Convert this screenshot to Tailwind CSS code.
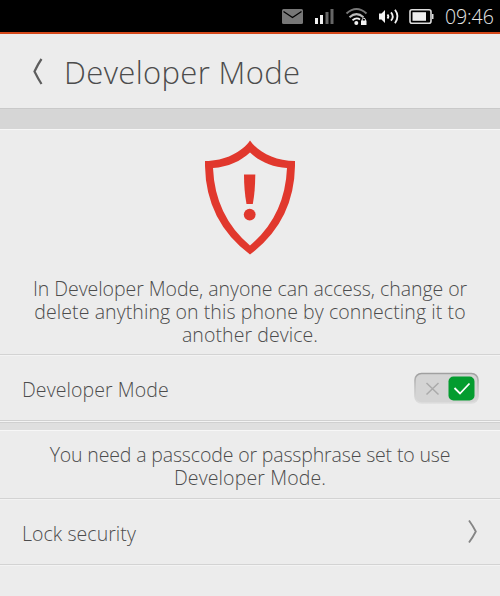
<!DOCTYPE html>
<html lang="en">
<head>
<meta charset="utf-8">
<title>Developer Mode</title>
<script src="https://cdn.jsdelivr.net/npm/@tailwindcss/browser@4"></script>
</head>
<body class="w-[500px] h-[596px] overflow-hidden bg-[#ececec] font-['Open_Sans','Noto_Sans',sans-serif] font-light text-[#4c4c4c]">
<div class="flex flex-col h-full">
  <header class="h-[34px] shrink-0 bg-black border-b-2 border-[#d4481a] flex items-center">
    <svg class="w-[160px] h-[32px] ml-[278px]" viewBox="278 0 160 32" fill="none">
      <rect x="282" y="9" width="21" height="15" rx="1.5" fill="#777"/>
      <path d="M283.500 11.500 292.500 17.500 301.500 11.500" stroke="#000" stroke-width="1.300"/>
      <path d="M315 18h3v6h-3zM320 15h3v9h-3z" fill="#f2f2f2"/>
      <path d="M325.500 12h3v12h-3zM330.500 9h3v15h-3z" fill="#666"/>
      <path d="M346.500 13.500Q356.500 4.500 366.500 13.500" stroke="#777" stroke-width="2"/>
      <path d="M349.500 17.200Q356.500 11 363.500 17.200" stroke="#bbb" stroke-width="2"/>
      <path d="M352.500 20.200Q356.500 17 360 19.500" stroke="#f2f2f2" stroke-width="1.800"/>
      <circle cx="356.300" cy="23" r="2" fill="#f2f2f2"/>
      <path d="M361 20.500h5.500v4.500H361z" fill="#f2f2f2"/>
      <path d="M362.200 21v-1.200a1.600 1.600 0 0 1 3.200 0V21" stroke="#f2f2f2" stroke-width="1"/>
      <path d="M379 13.500h2.500l3.500-3.500v13l-3.500-3.500H379z" fill="#f2f2f2"/>
      <path d="M387.500 14.500q1.700 2 0 4M391 12.300q3.500 4.200 0 8.400M395 9.800q5 6.700 0 13.400" stroke="#f2f2f2" stroke-width="1.800"/>
      <rect x="410" y="9.800" width="21" height="13.400" rx="2" stroke="#ddd" stroke-width="1.600"/>
      <path d="M412.500 12.200h13.500v8.600h-13.500z" fill="#eee"/>
      <path d="M432 14h1.500v5H432z" fill="#ddd"/>
    </svg>
    <span class="ml-[7px] mt-[2px] text-[19.5px] leading-[32px] text-[#e8e8e8] tracking-[-0.1px] whitespace-nowrap">09:46</span>
  </header>
  <div class="h-[74px] shrink-0 flex items-center">
    <svg class="ml-[30px] mt-[1px] w-[14px] h-[28px]" viewBox="30 57.5 14 28" fill="none"><path d="M41.500 58.500Q38 63.500 34.500 71 38 78 41.500 83.500" stroke="#5d5d5d" stroke-width="2.200"/></svg>
    <h1 class="ml-[20px] mt-[1px] text-[31px] leading-[40px] tracking-[0.36px] whitespace-nowrap">Developer Mode</h1>
  </div>
  <div class="h-[22px] shrink-0 bg-[#d6d6d6] border-t border-t-[#c9c9c9] border-b border-b-[#f7f7f7]"></div>
  <section class="h-[225px] shrink-0 border-b border-[#d3d3d3] flex flex-col items-center">
    <svg class="mt-[10px] w-[90px] h-[116px]" viewBox="205 140 90 116">
      <path fill="#e1382d" fill-rule="evenodd" d="M250 140.500C258 152 275 161 295 161Q296 220 250 254.500 204 220 205 161C225 161 242 152 250 140.500ZM250 152.500C241 161 228 167 213 168Q215 216 250 245.500 285 216 287 168C272 167 259 161 250 152.500Z"/>
      <path fill="#e1382d" d="M244 174.500h11.300q0 16-2.500 29.500h-6.300q-2.500-13.500-2.500-29.500z"/>
      <circle cx="249.700" cy="214.600" r="5.900" fill="#e1382d"/>
    </svg>
    <p class="mt-[21px] text-center text-[19.5px] leading-[23px] whitespace-nowrap"><span class="block tracking-[-0.05px]">In Developer Mode, anyone can access, change or</span><span class="block tracking-[0.09px]">delete anything on this phone by connecting it to</span><span class="block tracking-[0.07px]">another device.</span></p>
  </section>
  <div class="h-[66px] shrink-0 border-t border-t-[#f3f3f3] border-b border-b-[#d0d0d0] flex items-center justify-between pl-[22px] pr-[21px]">
    <span class="mt-[3px] text-[19.5px] leading-[24px] tracking-[0.08px]">Developer Mode</span>
    <svg class="w-[65px] h-[32px]" viewBox="414 372 65 32" fill="none">
      <defs><linearGradient id="rim" x1="0" y1="0" x2="0" y2="1"><stop stop-color="#a0a0a0"/><stop offset=".35" stop-color="#bcbcbc"/><stop offset="1" stop-color="#dedede"/></linearGradient></defs>
      <rect x="415" y="373.500" width="63" height="29.500" rx="6.500" fill="#d4d4d4" stroke="url(#rim)" stroke-width="1.600"/>
      <path d="M426.500 383 438.500 394.500M438.500 383 426.500 394.500" stroke="#aaa" stroke-width="1.500"/>
      <rect x="448.500" y="376.500" width="26" height="24" rx="5" fill="#049c2f"/>
      <path d="M454.500 388 460 393.500 469.500 383.500" stroke="#fff" stroke-width="1.800"/>
    </svg>
  </div>
  <div class="h-[10px] shrink-0 bg-[#dfdfdf] border-t border-t-[#f3f3f3] border-b border-b-[#f7f7f7] flex flex-col"><div class="h-px bg-[#d0d0d0]"></div></div>
  <section class="h-[68px] shrink-0 border-b border-[#d3d3d3] flex flex-col items-center">
    <p class="mt-[12px] text-center text-[19.5px] leading-[23px] whitespace-nowrap"><span class="block tracking-[-0.15px]">You need a passcode or passphrase set to use</span><span class="block tracking-[0.13px]">Developer Mode.</span></p>
  </section>
  <div class="h-[66px] shrink-0 border-t border-t-[#f3f3f3] border-b border-b-[#d3d3d3] flex items-center justify-between pl-[22px] pr-[20px]">
    <span class="mt-[3px] text-[19.5px] leading-[24px] tracking-[0.05px]">Lock security</span>
    <svg class="w-[14px] h-[24px]" viewBox="466 520 14 24" fill="none"><path d="M469 520.500Q473 526 475.800 531.500 473 537 469 542.500" stroke="#858585" stroke-width="1.800"/></svg>
  </div>
  <div class="flex-1 border-t border-[#f3f3f3]"></div>
</div>
</body>
</html>
